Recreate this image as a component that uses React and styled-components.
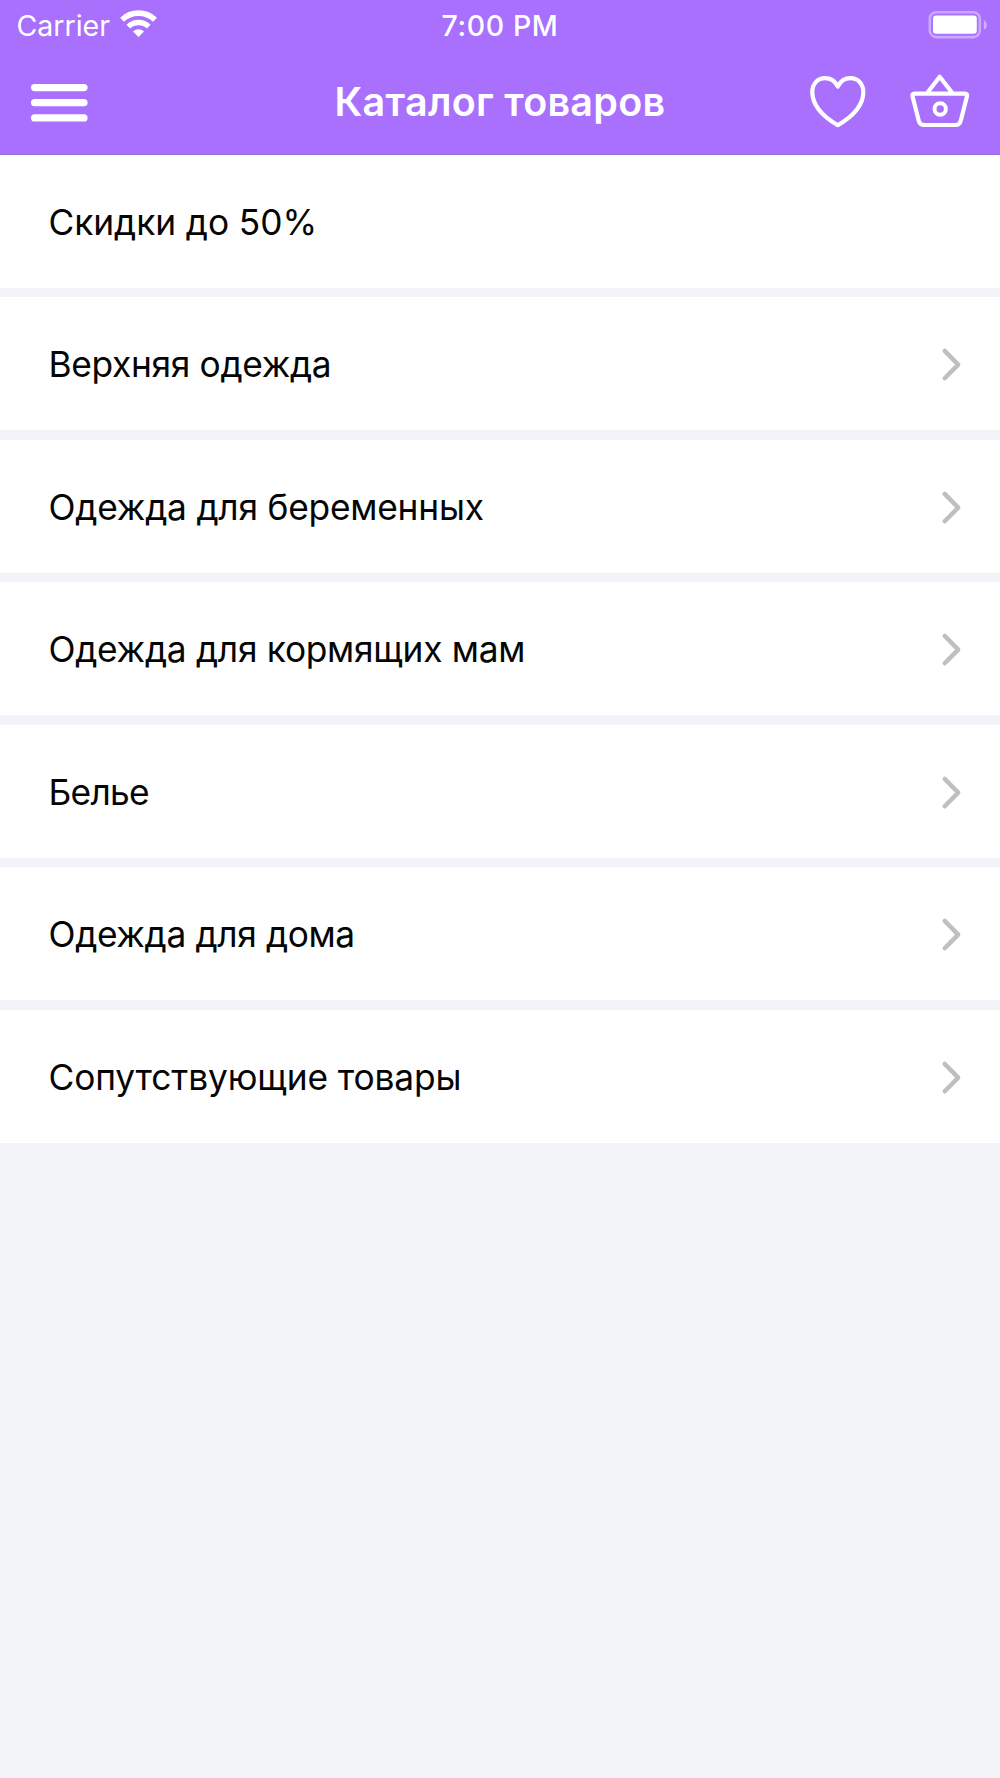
import React from 'react';
import styled, { createGlobalStyle } from 'styled-components';


const GlobalStyle = createGlobalStyle`
    body{
        margin:0;
        background:#f3f4f9;
        font-family:Inter, "Liberation Sans", sans-serif;
    }
`

const Page = styled.div`
    min-height:1778px;
    background:#f3f4f9;
`

const Header = styled.header`
    box-sizing:border-box;
    height:154.7px;
    background:#a870fd;
    border-bottom:1px solid #9a6ae0;
    color:#fff;
`

const StatusBar = styled.div`
    height:50px;
    display:grid;
    grid-template-columns:1fr auto 1fr;
    align-items:center;
`

const StatusSide = styled.div`
    display:flex;
    align-items:center;
    justify-content:${({$end})=>$end ? 'flex-end' : 'flex-start'};
    padding:${({$end})=>$end ? '0 12px 2px 0' : '0 0 0 16.5px'};
`

const StatusText = styled.span`
    padding-top:1px;
    font-size:28.5px;
    line-height:50px;
    font-weight:${({$weight})=>$weight || 400};
    letter-spacing:${({$spacing})=>$spacing || 0}px;
    white-space:nowrap;
`

const NavBar = styled.nav`
    height:104px;
    display:grid;
    grid-template-columns:1fr auto 1fr;
    align-items:center;
`

const Title = styled.h1`
    margin:0;
    font-size:39.5px;
    line-height:104px;
    font-weight:600;
    letter-spacing:.27px;
    white-space:nowrap;
`

const NavButton = styled.button`
    display:flex;
    padding:0;
    border:0;
    background:none;
    color:inherit;
    cursor:pointer;
`

const MenuButton = styled(NavButton)`
    margin:2px 0 0 31px;
`

const Actions = styled.div`
    display:flex;
    justify-content:flex-end;
    gap:44px;
    padding:0 30px 2px 0;
`

const Icon = styled.svg`
    display:block;
    flex:none;
    overflow:visible;
`

const WifiSvg = styled(Icon)`
    margin:-4px 0 0 10.5px;
`

const List = styled.ul`
    margin:0;
    padding:0;
    list-style:none;
    display:flex;
    flex-direction:column;
    gap:9.5px;
`

const Row = styled.li`
    box-sizing:border-box;
    height:133px;
    padding:3px 38px 0 48.5px;
    display:flex;
    align-items:center;
    justify-content:space-between;
    background:#fff;
    cursor:pointer;
`

const RowText = styled.span`
    color:#050505;
    font-size:35.3px;
    line-height:44px;
    letter-spacing:${({$spacing})=>$spacing}px;
    white-space:nowrap;
`

const WifiIcon = ()=>(
    <WifiSvg width="37" height="27" viewBox="0 0 37 27" fill="none" stroke="#fff">
        <path d="M2 9.7 A24 24 0 0 1 35 9.7" strokeWidth="5.6"/>
        <path d="M8.3 16.6 A14.8 14.8 0 0 1 28.7 16.6" strokeWidth="5.4"/>
        <path d="M18.5 27 L13 21.4 A8 8 0 0 1 24 21.4 Z" fill="#fff" stroke="none"/>
    </WifiSvg>
)

const BatteryIcon = ()=>(
    <Icon width="60" height="28" viewBox="0 0 60 28">
        <rect x="1.8" y="1.3" width="50" height="24.8" rx="6.5" fill="none" stroke="#fff" strokeOpacity=".4" strokeWidth="2.6"/>
        <rect x="5" y="4.5" width="43.8" height="18.2" rx="3" fill="#fff"/>
        <path d="M55.8 9 Q59 11 59 14 T55.8 19 Z" fill="#fff" fillOpacity=".45"/>
    </Icon>
)

const MenuIcon = ()=>(
    <Icon width="57" height="38" viewBox="0 0 57 38" fill="#fff">
        <rect y="0" width="56.6" height="7.2" rx="3.6"/>
        <rect y="15.1" width="56.6" height="7.2" rx="3.6"/>
        <rect y="30.3" width="56.6" height="7.2" rx="3.6"/>
    </Icon>
)

const HeartIcon = ()=>(
    <Icon width="56" height="54" viewBox="0 0 56 54" fill="none" stroke="#fff" strokeWidth="4.2" strokeLinejoin="round">
        <path d="M27.8 12.5 C25 7 20 4.2 15 4.2 C7.5 4.2 2.3 10 2.3 18 C2.3 31 12 42 27.8 51.2 C43.6 42 53.3 31 53.3 18 C53.3 10 48 4.2 40.6 4.2 C35.5 4.2 30.5 7 27.8 12.5 Z"/>
    </Icon>
)

const BasketIcon = ()=>(
    <Icon width="60" height="54" viewBox="0 0 60 54" fill="none" stroke="#fff" strokeWidth="4.2" strokeLinejoin="round">
        <path d="M4.5 19.6 H55 Q57.7 19.6 57 22.3 L50.8 46.5 Q49.7 51 45.5 51 H14 Q9.8 51 8.7 46.5 L2.5 22.3 Q1.8 19.6 4.5 19.6 Z"/>
        <path d="M17.5 18.5 L29.7 2.8 L42 18.5"/>
        <circle cx="30.2" cy="35" r="5.7" strokeWidth="4"/>
    </Icon>
)

const ChevronIcon = ()=>(
    <Icon width="20" height="34" viewBox="0 0 20 34" fill="none" stroke="#bfbfbf" strokeWidth="4.4" strokeLinecap="round" strokeLinejoin="round">
        <path d="M2.7 2.9 L16.2 16.6 L2.7 30.3"/>
    </Icon>
)

const categories = [
    {name:"Скидки до 50%", spacing:-.08, leaf:true},
    {name:"Верхняя одежда", spacing:-.33},
    {name:"Одежда для беременных", spacing:-.22},
    {name:"Одежда для кормящих мам", spacing:-.28},
    {name:"Белье", spacing:-.7},
    {name:"Одежда для дома", spacing:-.36},
    {name:"Сопутствующие товары", spacing:-.13},
]

const App = ()=>{
    return(
        <>
        <GlobalStyle/>
        <Page>
            <Header>
                <StatusBar>
                    <StatusSide>
                        <StatusText>Carrier</StatusText>
                        <WifiIcon/>
                    </StatusSide>
                    <StatusText $weight={500} $spacing={.6}>7:00 PM</StatusText>
                    <StatusSide $end>
                        <BatteryIcon/>
                    </StatusSide>
                </StatusBar>
                <NavBar>
                    <MenuButton aria-label="Меню"><MenuIcon/></MenuButton>
                    <Title>Каталог товаров</Title>
                    <Actions>
                        <NavButton aria-label="Избранное"><HeartIcon/></NavButton>
                        <NavButton aria-label="Корзина"><BasketIcon/></NavButton>
                    </Actions>
                </NavBar>
            </Header>
            <List>
                {categories.map(({name,spacing,leaf})=>(
                    <Row key={name}>
                        <RowText $spacing={spacing}>{name}</RowText>
                        {!leaf && <ChevronIcon/>}
                    </Row>
                ))}
            </List>
        </Page>
        </>
    )
}

export default App;
